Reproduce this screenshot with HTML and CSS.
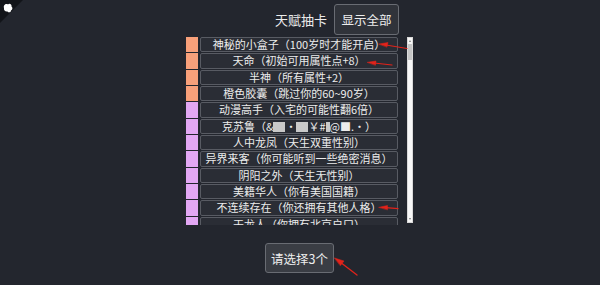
FILE: index.html
```html
<!DOCTYPE html>
<html lang="zh">
<head>
<meta charset="utf-8">
<title>天赋抽卡</title>
<link rel="stylesheet" href="styles.css">
</head>
<body>
<div class="corner">
  <svg width="24" height="24" viewBox="0 0 24 24">
    <polygon points="0,0 23,0 0,23" fill="#121419"/>
    <path d="M4,8 C3,5 6,3 8,4.5 C9,3 12,4 11.5,6.5 C13,7.5 12.5,10 11,10.5 C11,12.5 8.5,13 7.5,11.5 C5.5,12 3.5,10.5 4,8 Z" fill="#ffffff"/>
  </svg>
</div>
<div class="app">
  <div class="header">
    <span class="title">天赋抽卡</span>
    <button class="btn btn-top">显示全部</button>
  </div>
  <div class="list-wrap">
    <div class="list">
      <div class="row"><span class="swatch orange"></span><span class="cell">神秘的小盒子（100岁时才能开启）</span></div>
      <div class="row"><span class="swatch orange"></span><span class="cell">天命（初始可用属性点+8）</span></div>
      <div class="row"><span class="swatch orange"></span><span class="cell">半神（所有属性+2）</span></div>
      <div class="row"><span class="swatch orange"></span><span class="cell">橙色胶囊（跳过你的60~90岁）</span></div>
      <div class="row"><span class="swatch purple"></span><span class="cell">动漫高手（入宅的可能性翻6倍）</span></div>
      <div class="row"><span class="swatch purple"></span><span class="cell">克苏鲁（&amp;<i class="blk w12"></i>•<i class="blk w12"></i>￥#<i class="blk w4"></i>@■.•）</span></div>
      <div class="row"><span class="swatch purple"></span><span class="cell">人中龙凤（天生双重性别）</span></div>
      <div class="row"><span class="swatch purple"></span><span class="cell">异界来客（你可能听到一些绝密消息）</span></div>
      <div class="row"><span class="swatch purple"></span><span class="cell">阴阳之外（天生无性别）</span></div>
      <div class="row"><span class="swatch purple"></span><span class="cell">美籍华人（你有美国国籍）</span></div>
      <div class="row"><span class="swatch purple"></span><span class="cell">不连续存在（你还拥有其他人格）</span></div>
      <div class="row"><span class="swatch purple"></span><span class="cell">天龙人（你拥有北京户口）</span></div>
    </div>
    <div class="scrollbar">
      <span class="sb-arrow up"></span>
      <span class="sb-thumb"></span>
      <span class="sb-arrow down"></span>
    </div>
  </div>
  <div class="footer">
    <button class="btn btn-bottom">请选择3个</button>
  </div>
</div>
<svg class="arrows" width="600" height="285" viewBox="0 0 600 285">
  <g fill="#e2231a" stroke="#e2231a" stroke-linecap="round">
    <line x1="407" y1="48.5" x2="386" y2="45" stroke-width="1.2"/>
    <polygon points="379,44 388,42.5 387,46.8" stroke-width="0.5"/>
    <line x1="392" y1="65" x2="374" y2="63" stroke-width="1.2"/>
    <polygon points="367.5,62.3 376,61 375.5,65" stroke-width="0.5"/>
    <line x1="398" y1="208.7" x2="386" y2="207.7" stroke-width="1.2"/>
    <polygon points="379,207.3 387.5,205.5 387.5,209.5" stroke-width="0.5"/>
    <line x1="357" y1="275" x2="340" y2="262" stroke-width="1.3"/>
    <polygon points="334.5,258 344,261 340.5,265.5" stroke-width="0.5"/>
  </g>
</svg>
</body>
</html>
```
FILE: styles.css
```css
html, body {
  margin: 0;
  padding: 0;
}
body {
  background: #23262e;
  width: 600px;
  height: 285px;
  overflow: hidden;
  font-family: "Noto Sans CJK SC", "Noto Sans", sans-serif;
  color: #e9e9ea;
  position: relative;
}
.corner {
  position: absolute;
  left: 0;
  top: 0;
  width: 24px;
  height: 24px;
}
.corner svg { display: block; }
.app {
  width: 230px;
  margin: 0 auto;
  padding-top: 4px;
  display: flex;
  flex-direction: column;
}
.header {
  display: flex;
  align-items: center;
  justify-content: flex-end;
  gap: 7px;
  padding-right: 16px;
  height: 30px;
}
.title {
  font-size: 13px;
  line-height: 16px;
  color: #ececec;
  margin-top: 1px;
}
.btn {
  font-family: "Noto Sans CJK SC", "Noto Sans", sans-serif;
  color: #eeeeee;
  border: 1px solid #696c73;
  border-radius: 3px;
  padding: 0;
  cursor: pointer;
}
.btn-top {
  width: 65px;
  height: 31px;
  font-size: 12.5px;
  background: #30333a;
}
.list-wrap {
  display: flex;
  margin-top: 3px;
  padding-left: 1px;
}
.list {
  width: 212px;
  height: 188px;
  overflow: hidden;
  display: flex;
  flex-direction: column;
  gap: 1px;
}
.row {
  display: flex;
  flex: 0 0 15.33px;
  height: 15.33px;
}
.swatch {
  width: 12px;
  margin-right: 2px;
  flex: none;
}
.orange { background: #f8a07a; }
.purple { background: #e2a7f3; }
.cell {
  flex: 1;
  box-sizing: border-box;
  border: 1px solid #585b63;
  border-radius: 2px;
  background: #2a2d35;
  font-size: 11px;
  line-height: 13px;
  text-align: center;
  white-space: nowrap;
  overflow: hidden;
  color: #ececec;
}
.blk {
  display: inline-block;
  height: 10px;
  vertical-align: -1px;
  background: #c9c9c9;
}
.w12 { width: 12px; }
.w4 { width: 4px; }
.scrollbar {
  width: 6px;
  height: 186px;
  margin-left: 9px;
  background: #f7f7f7;
  border: 1px solid #d9d9d9;
  box-sizing: border-box;
  display: flex;
  flex-direction: column;
  align-items: center;
  padding: 1px 0;
}
.sb-arrow {
  width: 0;
  height: 0;
  border-left: 1.5px solid transparent;
  border-right: 1.5px solid transparent;
  margin: 1px 0;
}
.sb-arrow.up { border-bottom: 2px solid #777; }
.sb-arrow.down { border-top: 2px solid #777; margin-top: auto; }
.sb-thumb {
  width: 4px;
  height: 16px;
  background: #c6c6c6;
  margin-top: 1px;
}
.footer {
  display: flex;
  justify-content: center;
  margin-top: 18px;
  padding-right: 1px;
}
.btn-bottom {
  width: 69px;
  height: 30px;
  font-size: 12.5px;
  background: #3a3d44;
}
.arrows {
  position: absolute;
  left: 0;
  top: 0;
  pointer-events: none;
}
```
